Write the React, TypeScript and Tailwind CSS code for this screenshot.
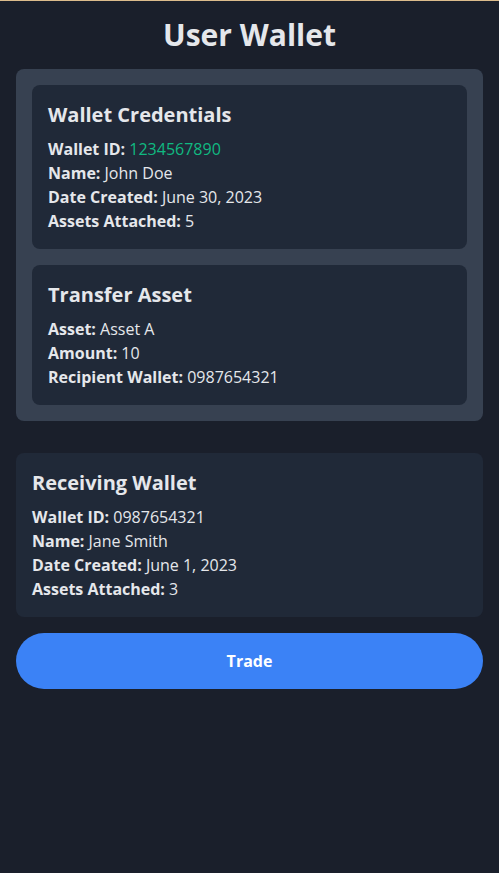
import React from "react";

type Row = { label: string; value: string; accent?: boolean };

function InfoCard({ title, rows, className }: { title: string; rows: Row[]; className?: string }) {
  return (
    <div className={`bg-[#202938] rounded-lg p-4 ${className ?? ""}`}>
      <h2 className="text-xl font-bold mb-2">{title}</h2>
      {rows.map((row) => (
        <p key={row.label}>
          <span className="font-bold">{row.label}</span>{" "}
          <span className={row.accent ? "text-[#10b981]" : undefined}>{row.value}</span>
        </p>
      ))}
    </div>
  );
}

export default function App() {
  return (
    <div
      className="min-h-[873px] bg-[#1a1f2b] text-[#e5e7eb] border-t border-[#dcbc8c] p-4"
      style={{ fontFamily: "'Open Sans', 'Noto Sans', sans-serif" }}
    >
      <h1 className="text-3xl font-bold text-center mb-4">User Wallet</h1>

      {/* Sender panel */}
      <div className="bg-[#374151] rounded-lg p-4 flex flex-col gap-4 mb-8">
        <InfoCard
          title="Wallet Credentials"
          rows={[
            { label: "Wallet ID:", value: "1234567890", accent: true },
            { label: "Name:", value: "John Doe" },
            { label: "Date Created:", value: "June 30, 2023" },
            { label: "Assets Attached:", value: "5" },
          ]}
        />
        <InfoCard
          title="Transfer Asset"
          rows={[
            { label: "Asset:", value: "Asset A" },
            { label: "Amount:", value: "10" },
            { label: "Recipient Wallet:", value: "0987654321" },
          ]}
        />
      </div>

      <InfoCard
        title="Receiving Wallet"
        className="mb-4"
        rows={[
          { label: "Wallet ID:", value: "0987654321" },
          { label: "Name:", value: "Jane Smith" },
          { label: "Date Created:", value: "June 1, 2023" },
          { label: "Assets Attached:", value: "3" },
        ]}
      />

      <button className="w-full h-14 rounded-full bg-[#3b82f6] text-white font-bold">
        Trade
      </button>
    </div>
  );
}
